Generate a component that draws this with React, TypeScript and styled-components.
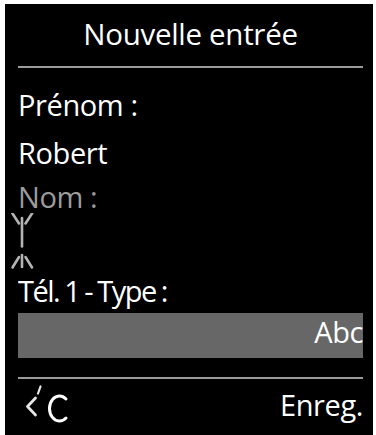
import React from 'react';
import styled, { createGlobalStyle } from 'styled-components';

const GlobalStyle = createGlobalStyle`
  html, body {
    margin: 0;
    padding: 0;
    background: #ffffff;
  }
  body {
    font-family: "Open Sans", "Noto Sans", sans-serif;
  }
`;

const Screen = styled.div`
  box-sizing: border-box;
  width: 368px;
  height: 431px;
  margin: 4px 0 0 5px;
  padding: 8px 10px 0 13px;
  background: #000000;
  color: #ffffff;
  display: flex;
  flex-direction: column;
  overflow: hidden;
`;

const Title = styled.div`
  font-size: 29.5px;
  line-height: 44px;
  text-align: center;
  letter-spacing: -0.3px;
`;

const Divider = styled.div<{ $gap: number }>`
  height: 2px;
  margin-top: ${p => p.$gap}px;
  background: #9a9a9a;
`;

const Fields = styled.div`
  display: flex;
  flex-direction: column;
  margin-top: 21px;
`;

const Row = styled.div<{ $muted?: boolean; $height?: number; $tight?: boolean }>`
  font-size: 29px;
  line-height: 32px;
  height: ${p => p.$height ?? 32}px;
  white-space: nowrap;
  letter-spacing: ${p => (p.$tight ? '-1.5px' : '-0.4px')};
  word-spacing: ${p => (p.$tight ? '-1px' : '0')};
  color: ${p => (p.$muted ? '#9c9c9c' : '#ffffff')};
`;

const CursorBox = styled.div`
  height: 62px;
  margin-left: -10px;
`;

const InputBar = styled.div`
  box-sizing: border-box;
  height: 45px;
  margin-top: 6px;
  padding-bottom: 8px;
  background: #676767;
  font-size: 29px;
  line-height: 37px;
  letter-spacing: -0.4px;
  text-align: right;
  overflow: hidden;
  white-space: nowrap;
`;

const Footer = styled.div`
  display: flex;
  justify-content: space-between;
  align-items: flex-start;
  height: 44px;
  margin-top: 3px;
`;

const SoftKey = styled.div`
  font-size: 29px;
  line-height: 32px;
  padding-top: 7px;
  letter-spacing: -0.4px;
`;

const BackIcon = styled.svg`
  display: block;
`;

function Cursor() {
  return (
    <CursorBox>
      <svg width="30" height="62" viewBox="0 0 30 62" fill="none" stroke="#b4b4b4" strokeWidth="2.6" strokeLinecap="round">
        <line x1="4.5" y1="0.5" x2="11" y2="10.5" />
        <line x1="24" y1="0.5" x2="17.5" y2="10.5" />
        <line x1="14" y1="5" x2="14" y2="33.5" />
        <line x1="14" y1="42" x2="14" y2="54" />
        <line x1="11" y1="44" x2="4.5" y2="54.5" />
        <line x1="17.5" y1="44" x2="24" y2="54.5" />
      </svg>
    </CursorBox>
  );
}

export default function App() {
  return (
    <>
      <GlobalStyle />
      <Screen>
        <Title>Nouvelle entrée</Title>
        <Divider $gap={10} />
        <Fields>
          <Row $height={48}>Prénom :</Row>
          <Row $height={44}>Robert</Row>
          <Row $muted>Nom :</Row>
          <Cursor />
          <Row $tight>Tél. 1 - Type :</Row>
          <InputBar>Abc</InputBar>
        </Fields>
        <Divider $gap={19} />
        <Footer>
          <BackIcon width="56" height="44" viewBox="0 0 56 44" fill="none" strokeLinecap="round" strokeLinejoin="round">
            <polyline points="17.5,16 9.5,24.5 17.5,33" stroke="#e6e6e6" strokeWidth="2.8" />
            <line x1="22.5" y1="4.5" x2="20" y2="11.5" stroke="#e6e6e6" strokeWidth="2.2" />
            <path d="M 48 17 A 10 12.5 0 1 0 48 36" stroke="#ffffff" strokeWidth="3" />
          </BackIcon>
          <SoftKey>Enreg.</SoftKey>
        </Footer>
      </Screen>
    </>
  );
}
